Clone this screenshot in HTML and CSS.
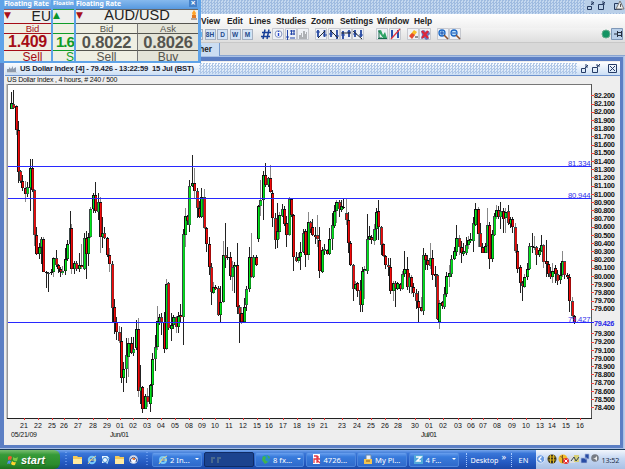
FILE: index.html
```html
<!DOCTYPE html>
<html lang="en">
<head>
<meta charset="utf-8">
<title>US Dollar Index</title>
<link rel="stylesheet" href="styles.css">
</head>
<body>
<div class="screen">
  <header class="app-title">
    <svg class="win-buttons" width="40" height="13"><g fill="none" stroke="#24395e"><path d="M2.500 6.500h4v3h-4zM13.500 4.500h5v5h-5zM29.500 3.500h7v6h-7z"/><path d="M6 5l3-3M7 1v3h2M17 5l3-3M18 1v3h2"/></g><path d="M31 9l4-8 4 8z" fill="#eee" stroke="#777"/><path d="M35.500 4v3" stroke="#555"/></svg>
  </header>
  <nav class="menu"><span class="m1">View</span><span class="m2">Edit</span><span class="m3">Lines</span><span class="m4">Studies</span><span class="m5">Zoom</span><span class="m6">Settings</span><span class="m7">Window</span><span>Help</span></nav>
  <div class="toolbar">
    <div class="periods"><b>4H</b><b>8H</b><b>D</b><b>W</b><b>M</b></div>
    <svg class="tools" width="204" height="14" viewBox="260 28 204 14">
      <g fill="#eef1f6" stroke="#b4b8c0" stroke-width=".7"><path d="M272.500 28.500h11v11h-11zM285.500 28.500h11v11h-11zM297.500 28.500h11v11h-11zM315.500 28.500h11v11h-11zM328.500 28.500h11v11h-11zM340.500 28.500h11v11h-11zM352.500 28.500h11v11h-11zM376.500 28.500h11v11h-11zM389.500 28.500h11v11h-11zM407.500 28.500h11v11h-11zM419.500 28.500h11v11h-11zM437.500 28.500h11v11h-11zM449.500 28.500h11v11h-11z"/></g>
      <path d="M262 32.500h9M261 36.500h9M265 29.500l-2 9.500M269 29.500l-2 9.500" stroke="#173f98" stroke-width="1.500"/>
      <circle cx="278.500" cy="34" r="3.400" fill="#f6f8ff" stroke="#8694ba"/><path d="M278.500 33v3M278.500 31v1" stroke="#2447d0" stroke-width="1.400"/>
      <path d="M287.500 30v10M286 37h3M291.500 30v5M294 30v5M290 31h5M290 34h5M290 38h5" stroke="#2547a8" fill="none"/>
      <path d="M299 39v-4h2v-2h1v4h1v-6h2v3h1v-2h1v7z" fill="#aeb1b5"/>
      <g stroke="#2447a0" stroke-width="1.800"><path d="M318 30v7M324.500 30v7M331 30v7M337 30v9M343 31v8M349 30v7M355 30v7M361 30v7"/><path d="M316 32h4M323 35h4M329 34h4M335 36h4M341 35h4M347 32h4M353 34h4M359 35h4" stroke-width="1"/></g>
      <g stroke="#202630"><path d="M318 38l7-7M330 30l8 8M341 33h10M353 31l9 8"/></g>
      <path d="M378 31l3-1 2 5 2-3 2 6h-4z" fill="#2fa465"/><path d="M379 30v8h3M378 38.500h9" fill="none" stroke="#17694a"/>
      <path d="M392 30v8M398 30v8" stroke="#2950ae" stroke-width="2"/><path d="M391 39l9-10" stroke="#e33541" stroke-width="1.300"/>
      <path d="M410 35l4-5 3 2-3 4z" fill="#f8bf25"/><path d="M409 36l3-3 3 2-3 4z" fill="#e44b31"/><path d="M415 37h3" stroke="#333"/>
      <path d="M421 31l3-1 2 2 3-1 1 3-2 2 1 3-3 1-2-2-3 1 1-4z" fill="#6677bd"/><path d="M422 31l6 7M428 31l-6 7" stroke="#dc263b" stroke-width="2.300"/>
      <g stroke="#1c67c5" fill="#bde5ff" stroke-width="1.300"><circle cx="442" cy="33" r="3"/><circle cx="454" cy="33" r="3"/></g><path d="M440 33h4M442 31v4M452 33h4" stroke="#1346a6"/><path d="M444 35l4 4M456 35l4 4" stroke="#8a5230" stroke-width="1.600"/>
    </svg>
    <svg class="status" width="23" height="13"><circle cx="5" cy="6" r="4" fill="#149463" stroke="#66ad8c"/><path d="M10.500 .5h11v11h-11z" fill="#b8cfe9" stroke="#7f98b8"/><path d="M13 6h3M16.500 3v6M17 4.500h3M17 7.500h3M20.500 3v6" stroke="#263040" fill="none"/></svg>
  </div>
  <div class="tabs"><span>her</span></div>
  <main class="chart-window">
    <div class="chart-title">
      <svg width="12" height="8"><path d="M1 7V4h2V2l2 2 2-3v3l3-2v5z" fill="#8e9aac"/><path d="M1 7.500h10" stroke="#cbd2db"/></svg>
      <strong>US Dollar Index [4] - 79.426 - 13:22:59 &nbsp;15 Jul (BST)</strong><i></i>
      <svg width="39" height="11"><g fill="none" stroke="#263c66"><path d="M2.500 5.500h4v4h-4zM13.500 4.500h5v5h-5zM29.500 1.500h8v8h-8z"/><path d="M6 5l3-3M7 1v3h2M17 5l4-4M18 1v2h3M31 3l5 5M36 3l-5 5"/></g></svg>
    </div>
    <div class="chart-info">US Dollar Index , 4 hours, # 240 / 500</div>
    <svg id="chart" width="611" height="359" viewBox="5 84 611 359"></svg>
  </main>
  <footer class="taskbar">
    <div class="start"><svg width="12" height="12"><path d="M1 3q2-2 4 0l-1 3q-2-1-3 0z" fill="#f05a32"/><path d="M6 3q2 2 5 0l-1 4q-2 1-4-1z" fill="#79ca43"/><path d="M1 7q1-1 3 0l-1 3q-1-1-3 0z" fill="#528ee8"/><path d="M5 7q2 2 4 1l-1 3q-2 1-4-1z" fill="#ffd32f"/></svg><b>start</b></div>
    <svg class="quick" width="86" height="18" viewBox="62 452 86 18">
      <path d="M66 453v15M147 453v15" stroke="#8eb8ff" stroke-dasharray="1 2"/>
      <path d="M73 457h4l1 1h4v7h-9zM115 457h4l1 1h4v7h-9z" fill="#f5c958"/><path d="M73 460h9v5h-9zM115 460h9v5h-9z" fill="#ffeaa0"/>
      <circle cx="92" cy="461" r="3.200" fill="none" stroke="#78cafb" stroke-width="2"/><path d="M90 461h6M88 465q3-6 8-8" stroke="#e9d98b" fill="none"/>
      <path d="M102 457h6v7h-6z" fill="#e8f5ff"/><circle cx="105" cy="461" r="2.500" fill="none" stroke="#3a82ce"/><path d="M107 457l2 2-2 6" stroke="#a9d7f2" fill="none"/>
      <circle cx="133.500" cy="460.500" r="4" fill="#f6f8ff" stroke="#b2c2dc"/><path d="M131 463a3 3 0 1 1 5 0" fill="none" stroke="#304990"/><path d="M132 459h3v2h-2z" fill="#e67733"/>
    </svg>
    <div class="task t1"><svg width="10" height="11"><circle cx="5" cy="6" r="3" fill="none" stroke="#78cafb" stroke-width="2"/><path d="M3 6h6M1 10q3-7 8-8" fill="none" stroke="#eadb8a"/></svg><span>2 In...</span><em></em></div>
    <div class="task active"><svg width="12" height="8"><path d="M1 1h4v2H3v4H1zM7 1h4v2H9v4H7z" fill="#47688f"/></svg></div>
    <div class="task t3"><svg width="10" height="11"><circle cx="5" cy="5" r="4" fill="#258fca"/><path d="M2 2l3 1-1 3 3 2-3 2-3-4zM6 1l3 2-1 2z" fill="#42b34b"/></svg><span>8 fx...</span><em></em></div>
    <div class="task t4"><svg width="10" height="11"><path d="M1 0h7v10H1z" fill="#fff"/><path d="M2 2h3v3H2v4M6 2v3h2M5 9V6l3 3" stroke="#e33b47" fill="none" stroke-width="1.300"/></svg><span>4726...</span></div>
    <div class="task t5"><svg width="10" height="11"><path d="M3 1h5v5H3z" fill="#e9f1fb" stroke="#6887ac"/><path d="M1 5h8v5H1z" fill="#f4c450"/><path d="M3 7h4" stroke="#885b1f"/></svg><span>My Pi...</span></div>
    <div class="task t6"><svg width="10" height="11"><path d="M0 1h9v9H0z" fill="#52a9d9"/><path d="M2 3h5L3 7h4" fill="none" stroke="#fff" stroke-width="1.500"/></svg><span>4 F...</span><em></em></div>
    <div class="desktop"><span>Desktop</span><sup>»</sup></div>
    <div class="lang">EN</div>
    <div class="tray"><svg width="63" height="13" viewBox="1 0 63 13"><circle cx="5.500" cy="6" r="4.200" fill="#6d9ce0" stroke="#dfebff"/><path d="M6.500 3.500L4 6l2.500 2.500" fill="none" stroke="#fff" stroke-width="1.300"/><circle cx="17" cy="6" r="4.500" fill="#3d3516"/><path d="M13.500 4h7M13.500 7h7M15.500 2v8M18.500 2v8" stroke="#d9b322"/><circle cx="28" cy="6" r="4.500" fill="#f3bd2c"/><path d="M25.500 3l5 5M27.500 2v8" stroke="#7d5720"/><circle cx="31" cy="8" r="3" fill="#e53232"/><path d="M29.500 6.500l3 3M32.500 6.500l-3 3" stroke="#fff"/><path d="M35 3h5v7h-5z" fill="#dcdde0"/><path d="M39 2h5v7h-5z" fill="#d8d078"/><path d="M36 8l3-4 2 4 3-4" stroke="#345" fill="none"/><path d="M50 1h4v5h-4zM46 5h6v5h-6z" fill="#294ca4" stroke="#aebce0" stroke-width=".7"/><circle cx="60" cy="5" r="3.800" fill="#777c85"/><path d="M58 5h2l2-2v5l-2-2" fill="#eee"/></svg><time>13:52</time></div>
  </footer>

  <aside class="rates">
    <section class="rate red"><h2>Floating Rate</h2><div class="quote"><div class="pair"><i>▼</i><b>EU</b></div><div class="cell label">Bid</div><div class="cell price">1.409</div><div class="cell side">Sell</div></div></section>
    <section class="rate green"><h2>Floatin</h2><div class="quote"><div class="pair"><i>▲</i></div><div class="cell label"></div><div class="cell price">1.6</div><div class="cell side">S</div></div></section>
    <section class="rate gray"><h2>Floating Rate<span>×</span></h2><div class="quote"><div class="pair"><i>▼</i><b>AUD/USD</b><svg width="8" height="11"><path d="M4 0l2 3-1 3H3L2 3z" fill="#ffa52a"/><path d="M2 5h4v3H2z" fill="#e37922"/><path d="M1 9h6" stroke="#795c50"/></svg></div><div class="cell label">Bid</div><div class="cell label">Ask</div><div class="cell price">0.8022</div><div class="cell price">0.8026</div><div class="cell side">Sell</div><div class="cell side">Buy</div></div></section>
  </aside>
</div>
<script src="chart.js"></script>
</body>
</html>
```
FILE: styles.css
```css
* { box-sizing: border-box; }
body { margin: 0; overflow: hidden; font-family: "Liberation Sans", Arial, sans-serif; }
svg { display: block; flex: none; }
.screen { width: 625px; height: 469px; position: relative; display: flex; flex-direction: column; background: #b9cdea; overflow: hidden; }
.app-title { height: 14px; flex: none; display: flex; justify-content: flex-end; background: repeating-conic-gradient(#9fbbe0 0 25%, #c4d8ef 0 50%) 0 0 / 3px 3px; }
.win-buttons { background: #b9cfe8; }
.menu { height: 14px; flex: none; display: flex; align-items: center; padding-left: 201px; background: linear-gradient(#fff, #f0f0f0); font-size: 8.4px; line-height: 12px; font-weight: bold; color: #222; white-space: nowrap; }
.menu span { flex: none; }
.m1 { width: 26px; } .m2 { width: 22px; } .m3 { width: 27px; } .m4 { width: 35px; } .m5 { width: 29px; } .m6 { width: 37px; } .m7 { width: 37px; }
.toolbar { height: 14px; flex: none; display: flex; padding-left: 192px; background: linear-gradient(#f3f3f3, #dedede); }
.periods { width: 68px; display: flex; gap: 1.5px; padding-top: 1px; }
.periods b { width: 11px; height: 11px; border: 1px solid #a6b1c1; background: #d4e3f5; color: #23498a; font-size: 6.5px; line-height: 10px; text-align: center; flex: none; }
.status { margin-left: auto; margin-right: 1px; }
.tabs { height: 14px; flex: none; padding-left: 180px; background: #d8d8d8; border-top: 1px solid #c8c8c8; border-bottom: 1px solid #89a5d1; }
.tabs span { display: block; width: 40px; height: 13px; text-align: right; padding-right: 7px; background: #cbddf2; border-right: 1px solid #769acd; font: bold 8.2px/13px "Liberation Sans", sans-serif; color: #222; }
.chart-window { height: 391px; flex: none; margin: 1px 2px 0 0; border: solid #5c7fc4; border-width: 4px 3px 3px 4px; background: #eee; outline: 1px solid #a9c0e5; }
.chart-title { height: 14px; margin: 1px 0 0 1px; display: flex; align-items: center; gap: 2px; padding: 0 2px 0 1px; background: linear-gradient(#fff, #ccdff5); border-bottom: 1px solid #6e93cd; white-space: nowrap; }
.chart-title strong { font-size: 7.7px; line-height: 12px; color: #1d2634; width: 177px; flex: none; letter-spacing: -.21px; }
.chart-title i { height: 11px; flex: 1; background: repeating-conic-gradient(#afc7e7 0 25%, transparent 0 50%) 0 0 / 3px 3px; }
.chart-info { height: 8px; padding-left: 3px; font-size: 7px; line-height: 8px; letter-spacing: -.18px; color: #111; white-space: pre; }
#chart { margin-left: 1px; }
#chart text { font-family: "Liberation Sans", sans-serif; font-size: 7px; fill: #111; }
#chart .price { font-size: 7.3px; }
#chart .blue { fill: #2525e8; }
#chart .level { font-size: 7.7px; fill: #3030e8; }
.taskbar { height: 20px; flex: none; margin-top: 1px; border-top: 1px solid #173a58; background: linear-gradient(#76a5eb 0, #3976d8 18%, #245ac2 65%, #1c49a8); display: flex; align-items: center; color: #fff; font: 7.6px/14px "Noto Sans", sans-serif; }
.start { width: 60px; height: 19px; flex: none; display: flex; align-items: center; gap: 2px; padding-left: 7px; border-radius: 0 6px 6px 0; background: linear-gradient(#78bd70, #369a38 25%, #2b8c2d 75%, #1b701e); }
.start b { font: italic bold 11px/16px "Liberation Sans", sans-serif; text-shadow: 1px 1px #246625; }
.quick { margin-left: 2px; }
.task { height: 15px; flex: none; margin-right: 1.5px; padding-left: 5px; display: flex; align-items: center; gap: 2px; border: 1px solid #4d86dc; border-radius: 2px; background: linear-gradient(#69a0ef, #387bdc 30%, #2f6acb); white-space: nowrap; }
.t1 { margin-left: 4px; width: 50px; } .active { width: 50px; background: #1c438e; border-color: #102c66; } .t3 { width: 49px; } .t4, .t5 { width: 50px; }
.t6 { width: 50px; margin-right: 7px; padding-left: 4px; }
.task em { margin: 1px 2px 0 auto; border: 2px solid transparent; border-top-color: #fff; }
.desktop { width: 45px; flex: none; padding-left: 4px; border-left: 1px dotted #a7caff; display: flex; font-size: 7.2px; }
.desktop sup { font-size: 9px; line-height: 8px; margin-left: 3px; }
.lang { width: 25px; height: 14px; flex: none; padding-left: 7px; border-left: 1px dotted #a7caff; font-size: 7.5px; }
.tray { height: 19px; flex: 1; display: flex; align-items: center; gap: 3px; background: linear-gradient(#f2f6fc, #c5d7f2 45%, #a9c1e5); color: #223047; }
.tray time { font-size: 7.2px; letter-spacing: -.1px; }
.rates { position: absolute; left: 0; top: 0; display: flex; height: 63px; }
.rate { height: 63px; overflow: hidden; border: solid #5fa3e8; border-width: 0 2px 2px 2px; background: #5fa3e8; }
.rate h2 { margin: 0; height: 9px; background: linear-gradient(#86b9ed, #5799df); color: #fff; font: bold 6.8px/7px "Noto Sans", sans-serif; display: flex; white-space: nowrap; justify-content: space-between; }
.rate h2 span { width: 8px; height: 7px; background: #4481c9; text-align: center; font-size: 9px; line-height: 6px; margin-right: 1px; }
.red { width: 51px; padding-left: 2px; color: #a50d16; } .green { width: 23px; color: #109b27; } .gray { width: 127px; color: #55554f; border-right-width: 3px; }
.red { border-right-width: 0; } .green { border-right-width: 0; }
.green h2 { font-size: 6px; }
.quote { height: 52px; display: grid; grid-template-rows: 13px 10px 17px 11px; background: #efefe3; border-top: 1px solid #9b5c5a; overflow: hidden; }
.gray .quote { grid-template-columns: 1fr 1fr; border-color: #666; }
.green .quote { border-color: #2a9c40; }
.pair { height: 13px; display: flex; color: #222; overflow: hidden; background: #eeefec; }
.gray .pair { grid-column: 1 / -1; }
.pair i { width: 8px; font: normal 9px/11px "DejaVu Sans", sans-serif; color: #a70f1a; flex: none; }
.green i { color: #0b962b; }
.pair b { flex: 1; text-align: center; font-weight: normal; font-size: 14px; line-height: 12px; }
.gray .pair b { font-size: 14.6px; line-height: 11px; }
.red .pair b { text-align: right; }
.cell { overflow: hidden; text-align: center; border-top: 1px solid currentColor; white-space: nowrap; }
.gray .cell:nth-child(odd) { border-left: 1px solid #777; background: #e4e4d8; }
.label { font-size: 9.5px; line-height: 9px; }
.price { font-size: 17px; line-height: 16px; font-weight: bold; letter-spacing: -.2px; }
.gray .price { font-size: 16.5px; }
.red .price { font-size: 16px; padding-left: 4px; text-align: left; }
.red .label, .red .side { padding-left: 10px; }
.green .price { text-align: left; padding-left: 3px; font-size: 15px; letter-spacing: -1px; }
.side { font-size: 12px; line-height: 12px; }
.green .side { text-align: right; }
```
FILE: chart.js
```js
const NS = 'http://www.w3.org/2000/svg';
const chart = document.getElementById('chart');
function add(tag, attrs, text) {
  const node = document.createElementNS(NS, tag);
  for (const key in attrs) node.setAttribute(key, attrs[key]);
  if (text !== undefined) node.textContent = text;
  chart.append(node);
}
function line(x1, y1, x2, y2, stroke) { add('line', {x1, y1, x2, y2, stroke}); }

add('rect', {x: 7, y: 84, width: 585, height: 335, fill: '#fff'});
line(7, 84.5, 592, 84.5, '#777');
add('rect', {x: 6.5, y: 84, width: 1.5, height: 335, fill: '#999'});

// Each series has an origin; candles are x, high, top, bottom, low, color in third-pixel units.
const series = [
[0,80,`33 36 68 87 87 g;40 30 72 83 88 r;48 75 78 150 166 r;55 124 150 275 308 r;62 270 272 304 308 r;68 284 304 325 333 r;75 302 325 341 366 r;82 307 322 341 350 g;91 237 264 323 392 g;98 237 264 331 335 r;104 327 330 464 498 r;110 440 464 522 526 r;118 490 502 523 537 g;125 472 478 502 552 g;131 472 478 575 577 r;203 480 491 538 542 g;210 393 445 491 494 g;215 433 445 566 582 r;237 518 554 566 575 g;244 492 554 560 566 r;252 458 473 566 570 g;259 452 473 522 597 r;265 458 472 522 558 g;272 382 388 472 474 g;280 338 345 388 400 g;287 307 345 394 400 r;294 338 366 395 420 g;301 352 366 472 520 r;308 410 458 472 505 g;314 440 458 474 478 r;321 472 474 524 530 r`],
[0,240,`139 92 95 99 143 r;146 97 98 101 155 r;153 86 97 100 104 r;161 50 55 97 112 g;168 30 55 76 82 r;174 72 75 88 100 r;181 80 88 97 110 r;187 78 92 98 106 g;195 24 58 92 104 g;223 62 70 86 102 g;230 64 70 86 92 r;328 25 44 72 95 r;336 62 72 204 250 r;343 178 200 245 283 r;350 230 245 276 300 r;358 258 276 304 308 r;364 262 304 414 430 r;371 365 388 414 455 g;379 293 346 388 428 g;386 295 310 350 410 g;393 290 310 338 342 r;400 290 328 338 348 g;408 240 266 325 330 g;415 235 266 452 470 r;422 375 442 452 492 g;428 438 442 506 518 r;436 462 468 506 508 g;443 445 468 486 500 r;450 432 436 492 516 g;457 340 358 434 470 g;465 285 320 358 392 g;471 198 244 320 330 g;478 222 230 246 256 g`],
[150,140,`35 518 530 546 585 r;42 516 546 627 640 r;49 418 432 628 630 g;56 426 430 565 570 r;64 520 556 566 604 g;71 525 532 556 566 g;78 528 532 562 580 r;85 515 528 562 580 g;92 492 526 532 550 r;100 268 283 532 614 g;106 204 229 284 320 g;113 226 229 242 256 r;119 120 137 254 275 g;126 45 128 138 142 g;133 84 128 152 176 r;141 145 152 205 234 r;148 184 205 230 235 r;155 145 170 230 234 g;163 148 170 265 268 r;169 260 265 313 335 r;177 292 313 380 406 r;184 370 380 456 494 r;190 426 442 460 462 g;197 436 440 446 450 r;205 438 445 524 528 r;212 438 486 526 545 g;219 304 346 486 490 g;225 248 346 354 384 r;233 322 350 355 360 g;240 335 352 408 420 r;247 362 380 410 452 g;254 366 376 380 460 g;262 308 376 500 522 r;269 495 500 522 608 r;275 500 520 546 552 r;282 474 500 547 550 g;290 438 448 496 514 g;297 320 350 448 455 g;304 280 350 412 414 r;311 344 352 412 414 g;319 346 352 376 378 r;325 194 199 298 306 g;332 120 180 198 228 g;339 94 104 180 240 g;346 70 104 136 140 r;354 110 115 136 142 g;361 76 115 156 160 r;368 150 160 235 262 r;375 220 235 300 326 r;381 190 274 301 325 g;389 215 226 276 296 g;396 192 206 228 232 g;403 198 206 252 258 r;410 228 250 284 322 r;418 172 178 284 288 g;424 175 178 226 232 r;431 222 226 352 392 r;438 336 352 364 366 r;445 340 350 364 368 g;452 306 335 350 390 g;460 266 278 335 338 g;467 268 272 346 380 r;474 216 247 346 360 g`],
[300,140,`31 242 247 266 280 r;38 236 262 284 288 r;45 262 284 290 312 r;52 225 286 298 322 r;59 262 300 394 414 r;67 320 330 396 400 g;74 312 326 332 345 g;82 326 330 342 344 r;88 264 296 342 344 g;96 220 255 296 330 g;103 196 214 258 264 g;109 180 186 214 250 g;117 180 186 208 230 r;124 180 198 210 215 g;131 178 200 204 206 g;138 178 218 240 255 r;144 215 240 310 340 r;152 304 310 374 378 r;159 372 374 446 482 r;167 424 432 446 450 g;173 426 430 452 470 r;180 420 450 494 516 r;186 380 392 496 516 g;193 378 388 392 476 g;201 222 296 392 402 g;209 258 288 296 300 g;215 286 290 300 312 r;222 252 268 302 316 g;229 204 216 268 300 g;236 180 212 262 300 r;243 258 262 314 344 r;250 310 312 348 350 r;257 346 348 376 388 r;264 355 374 382 408 r;272 354 382 454 462 r;279 422 428 454 484 g;286 424 430 444 502 r;293 426 430 446 450 g;301 428 432 446 452 r;307 392 402 446 450 g;314 334 386 402 410 g;321 352 386 440 450 r;328 400 412 440 460 g;335 404 412 442 462 r;341 430 440 460 470 r;348 448 460 484 506 r;356 454 484 504 546 r;363 470 500 512 516 r;371 324 346 512 524 g;377 340 346 360 390 r;383 346 360 376 390 r;391 308 355 378 388 g;398 330 355 404 420 r;405 378 402 408 440 r;412 402 404 538 540 r;419 480 488 545 566 g;427 484 486 498 506 r;434 440 462 500 506 g;440 395 408 462 470 g;448 376 400 410 440 g;455 345 358 402 410 g;463 320 334 358 360 g;470 254 294 336 348 g;477 286 294 320 346 r`],
[450,140,`35 302 320 340 370 r;41 310 334 342 348 g;48 290 314 338 344 g;55 288 300 314 328 g;62 280 298 304 308 g;69 230 250 304 335 g;77 188 208 254 258 g;84 202 208 282 322 r;90 248 280 320 322 r;97 310 320 338 340 r;105 308 318 338 340 g;112 205 256 318 338 g;119 246 256 358 388 r;126 270 282 358 366 g;133 218 228 284 288 g;140 196 210 230 238 g;146 198 210 232 236 r;152 186 212 232 268 g;160 204 212 236 280 r;167 204 216 234 278 g;175 194 214 250 254 r;182 230 236 252 264 g;188 230 236 262 278 r;196 250 262 334 338 r;203 312 332 386 400 r;210 376 382 430 460 r;217 424 428 438 484 r;224 402 410 440 444 g;232 370 388 410 420 g;239 310 318 386 390 g;246 280 318 322 340 r;253 288 320 322 330 r;260 318 322 346 374 r;267 324 330 346 350 g;274 284 316 332 335 g;281 312 316 365 384 r;288 300 364 372 410 r;295 362 372 402 412 r;302 380 400 412 416 r;308 370 394 412 430 g;316 374 384 402 428 r;322 390 402 424 436 r;330 370 405 420 432 g;337 334 364 404 412 g;344 362 364 406 418 r;351 400 406 412 418 r;358 402 412 482 516 r;366 470 482 528 535 r;373 524 528 548 552 r`]];
const candles = [];
for (const [ox, oy, data] of series)
  for (const row of data.split(';')) {
    const p = row.split(' ');
    candles.push({x: Math.floor(ox + p[0] / 3), y: p.slice(1, 5).map(v => Math.round(oy + v / 3)), c: p[5]});
  }
candles.sort((a, b) => a.x - b.x);
candles.forEach((k, i) => {
  const [h, t, b, l] = k.y;
  line(k.x + .5, h, k.x + .5, l, i % 4 === 2 ? '#888' : '#222');
});
candles.forEach((k, i) => {
  const [, t, b] = k.y;
  const height = Math.max(1, b - t);
  add('rect', {x: k.x - 1, y: t, width: 3, height, fill: i % 3 === 1 ? '#3b4646' : '#101010'});
  if (height > 1) add('rect', {x: k.x, y: t + 1, width: 1.65, height: Math.max(1, height - 1.5), fill: k.c === 'g' ? '#00e61a' : '#f20808'});
});
for (const [y, label] of [[166, '81.334'], [198, '80.944'], [322, '79.427']]) {
  add('rect', {x: 8, y, width: 583, height: 1, fill: '#2828ff'});
  add('text', {x: 568, y: y - .5, class: 'level', textLength: 22.5}, label);
}
line(591.5, 84, 591.5, 419, '#555');
line(7, 418.5, 592, 418.5, '#222');
for (let n = 822; n >= 784; n--) {
  if (n === 795 || n === 794) continue;
  const y = 95.3 + (822 - n) * 8.21;
  line(591, Math.round(y) + .5, 594, Math.round(y) + .5, '#e44');
  add('text', {x: 594, y: y + 2.7, class: 'price', textLength: 20.5}, (n / 10).toFixed(3));
}
line(591, 322.5, 594, 322.5, '#22f');
add('text', {x: 594, y: 325.5, class: 'price blue', textLength: 20}, '79.426');
const days = '21:24 22:38 25:52 26:64 27:78 28:93 29:107 01:120 02:133 03:147 04:161 05:175 08:189 09:202 10:215 11:229 12:243 15:257 16:269 17:283 18:297 19:311 21:324 23:342 24:357 25:371 26:385 28:398 30:415 01:429 02:443 03:458 06:471 07:483 08:497 09:512 10:526 13:540 14:552 15:566 16:580';
for (const item of days.split(' ')) {
  const [label, x] = item.split(':');
  line(+x + .5, 418, +x + .5, 420, '#e33');
  add('text', {x, y: 428, 'text-anchor': 'middle'}, label);
}
add('text', {x: 11, y: 437, textLength: 26}, '05/21/09');
add('text', {x: 110, y: 437, textLength: 19}, 'Jun/01');
add('text', {x: 421, y: 437, textLength: 16}, 'Jul/01');
```
